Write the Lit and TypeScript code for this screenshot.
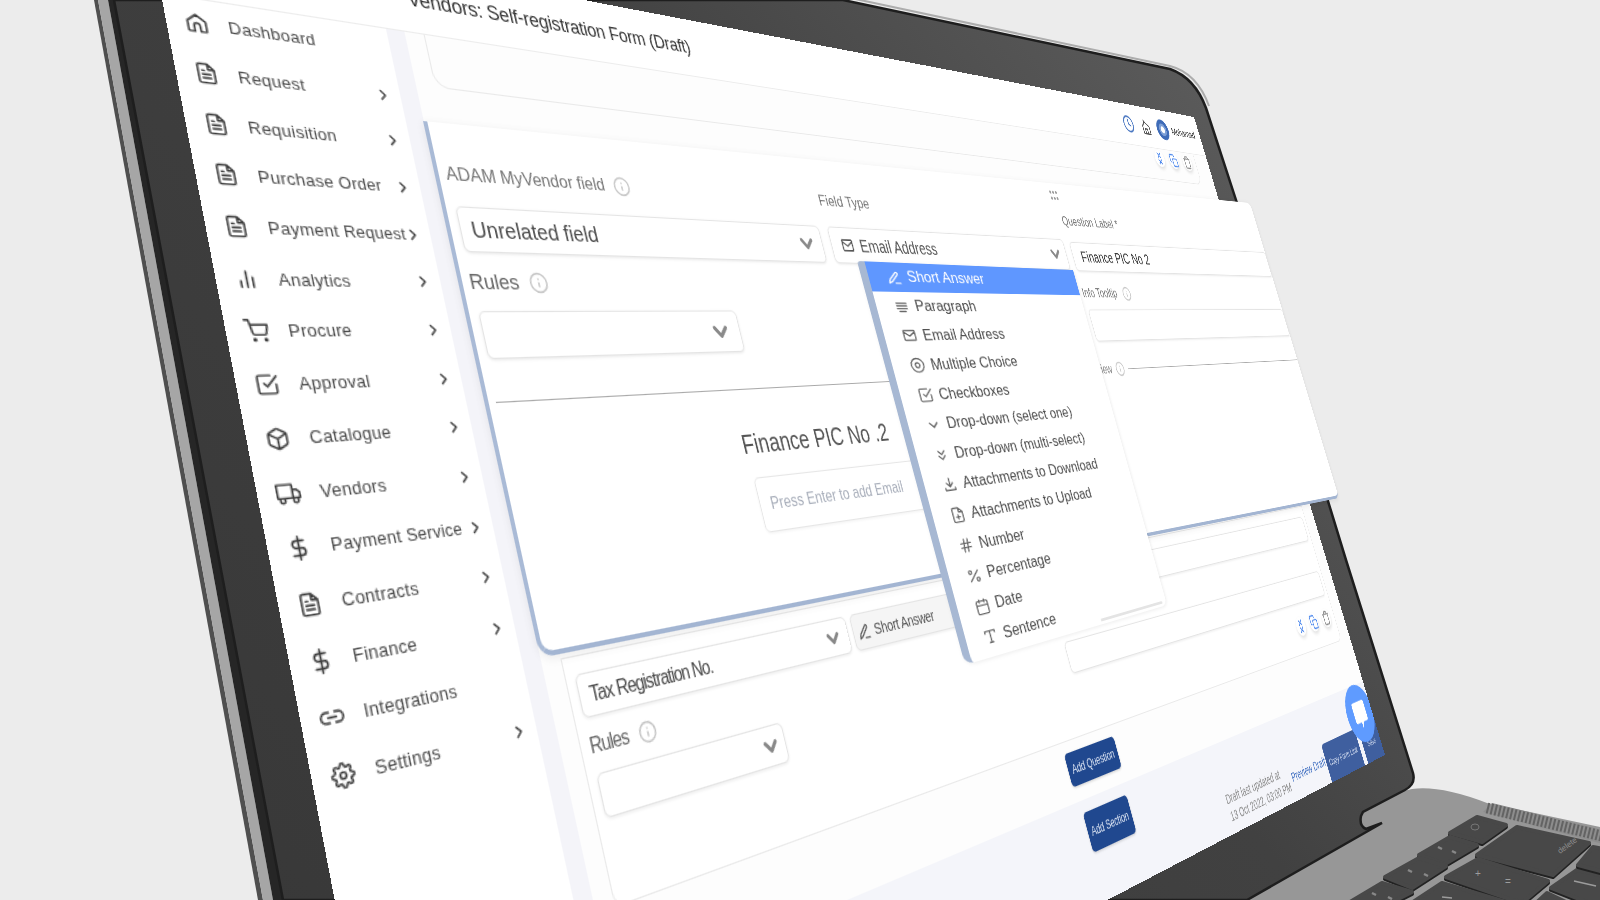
import { LitElement, html, css, svg } from "lit";
import { customElement } from "lit/decorators.js";

type P = [number, number];

function quad(W: number, H: number, q: [P, P, P, P]): string {
  const [p0, p1, p2, p3] = q;
  const det = (ax: number, ay: number, bx: number, by: number) => ax * by - ay * bx;
  const dx1 = p1[0] - p2[0], dy1 = p1[1] - p2[1];
  const dx2 = p3[0] - p2[0], dy2 = p3[1] - p2[1];
  const sx = p0[0] - p1[0] + p2[0] - p3[0], sy = p0[1] - p1[1] + p2[1] - p3[1];
  const D = det(dx1, dy1, dx2, dy2);
  const g = det(sx, sy, dx2, dy2) / D;
  const h = det(dx1, dy1, sx, sy) / D;
  const a = p1[0] - p0[0] + g * p1[0], b = p3[0] - p0[0] + h * p3[0], c = p0[0];
  const d = p1[1] - p0[1] + g * p1[1], e = p3[1] - p0[1] + h * p3[1], f = p0[1];
  return `matrix3d(${a / W},${d / W},0,${g / W},${b / H},${e / H},0,${h / H},0,0,1,0,${c},${f},0,1)`;
}

const circ = (x: number, y: number, r: number) => `M${x - r} ${y}a${r} ${r} 0 1 0 ${2 * r} 0a${r} ${r} 0 1 0 ${-2 * r} 0`;

const I: Record<string, string> = {
  home: "M3 10l9-7 9 7v10a1 1 0 0 1-1 1h-5v-6a3 3 0 0 0-6 0v6H4a1 1 0 0 1-1-1z",
  doc: "M14 2H6a2 2 0 0 0-2 2v16a2 2 0 0 0 2 2h12a2 2 0 0 0 2-2V8zM14 2v6h6M8 13h8M8 17h8M8 9h2",
  bars: "M18 20V10M12 20V4M6 20v-6",
  cart: circ(9, 21, 1) + circ(20, 21, 1) + "M1 1h4l2.68 13.39a2 2 0 0 0 2 1.61h9.72a2 2 0 0 0 2-1.61L23 6H6",
  check: "M9 11l3 3L22 4M21 12v7a2 2 0 0 1-2 2H5a2 2 0 0 1-2-2V5a2 2 0 0 1 2-2h11",
  box: "M21 16V8a2 2 0 0 0-1-1.73l-7-4a2 2 0 0 0-2 0l-7 4A2 2 0 0 0 3 8v8a2 2 0 0 0 1 1.73l7 4a2 2 0 0 0 2 0l7-4A2 2 0 0 0 21 16zM3.27 6.96L12 12.01l8.73-5.05M12 22.08V12",
  truck: "M1 3h15v13H1zM16 8h4l3 3v5h-7z" + circ(5.5, 18.5, 2.5) + circ(18.5, 18.5, 2.5),
  dollar: "M12 1v22M17 5H9.5a3.5 3.5 0 0 0 0 7h5a3.5 3.5 0 0 1 0 7H6",
  link: "M15 7h3a5 5 0 0 1 0 10h-3M9 17H6a5 5 0 0 1 0-10h3M8 12h8",
  gear: circ(12, 12, 3) + "M19.4 15a1.65 1.65 0 0 0 .33 1.82l.06.06a2 2 0 0 1 0 2.83 2 2 0 0 1-2.83 0l-.06-.06a1.65 1.65 0 0 0-1.82-.33 1.65 1.65 0 0 0-1 1.51V21a2 2 0 0 1-2 2 2 2 0 0 1-2-2v-.09A1.65 1.65 0 0 0 9 19.4a1.65 1.65 0 0 0-1.82.33l-.06.06a2 2 0 0 1-2.83 0 2 2 0 0 1 0-2.83l.06-.06a1.65 1.65 0 0 0 .33-1.82 1.65 1.65 0 0 0-1.51-1H3a2 2 0 0 1-2-2 2 2 0 0 1 2-2h.09A1.65 1.65 0 0 0 4.6 9a1.65 1.65 0 0 0-.33-1.82l-.06-.06a2 2 0 0 1 0-2.83 2 2 0 0 1 2.83 0l.06.06a1.65 1.65 0 0 0 1.82.33H9a1.65 1.65 0 0 0 1-1.51V3a2 2 0 0 1 2-2 2 2 0 0 1 2 2v.09a1.65 1.65 0 0 0 1 1.51 1.65 1.65 0 0 0 1.82-.33l.06-.06a2 2 0 0 1 2.83 0 2 2 0 0 1 0 2.83l-.06.06a1.65 1.65 0 0 0-.33 1.82V9a1.65 1.65 0 0 0 1.51 1H21a2 2 0 0 1 2 2 2 2 0 0 1-2 2h-.09a1.65 1.65 0 0 0-1.51 1z",
  pen: "M3 21l1.5-5L15 5.5a2.1 2.1 0 0 1 3 3L7.5 19zM13 21h8",
  lines: "M4 7h16M4 11h16M4 15h16M7 19h10",
  mail: "M4 5h16a1 1 0 0 1 1 1v12a1 1 0 0 1-1 1H4a1 1 0 0 1-1-1V6a1 1 0 0 1 1-1zM3 7l9 6 9-6",
  radio: circ(12, 12, 10) + circ(12, 12, 3.5),
  down: "M6 9l6 6 6-6",
  ddown: "M7 6l5 5 5-5M7 13l5 5 5-5",
  dl: "M12 3v12M7 10l5 5 5-5M4 17v3h16v-3",
  upl: "M14 2H6a2 2 0 0 0-2 2v16a2 2 0 0 0 2 2h12a2 2 0 0 0 2-2V8zM14 2v6h6M12 18v-6M9 15h6",
  hash: "M4 9h16M4 15h16M10 3L8 21M16 3l-2 18",
  pct: "M19 5L5 19" + circ(6.5, 6.5, 2.5) + circ(17.5, 17.5, 2.5),
  cal: "M5 4h14a2 2 0 0 1 2 2v14a2 2 0 0 1-2 2H5a2 2 0 0 1-2-2V6a2 2 0 0 1 2-2zM16 2v4M8 2v4M3 10h18",
  type: "M4 7V4h16v3M9 20h6M12 4v16",
  info: circ(12, 12, 10) + "M12 16v-4M12 8h.01",
  clock: circ(12, 12, 10) + "M12 6v6l4 2",
  bell: "M4 22V11l5-4V3l4 4 7 4v11zM9 22v-7h5v7",
  copy: "M11 9h9a2 2 0 0 1 2 2v9a2 2 0 0 1-2 2h-9a2 2 0 0 1-2-2v-9a2 2 0 0 1 2-2zM5 15H4a2 2 0 0 1-2-2V4a2 2 0 0 1 2-2h9a2 2 0 0 1 2 2v1",
  trash: "M3 6h18M19 6v14a2 2 0 0 1-2 2H7a2 2 0 0 1-2-2V6m3 0V4a2 2 0 0 1 2-2h4a2 2 0 0 1 2 2v2",
  move: "M8 3l8 7M16 3l-8 7M8 14l8 7M16 14l-8 7",
  next: "M9 5l7 7-7 7",
  vee: "M5 8l7 8 7-8",
};

const icon = (n: string, cls = "") =>
  html`<svg class="ic ${cls}" viewBox="0 0 24 24" fill="none" stroke="currentColor" stroke-width="2" stroke-linecap="round" stroke-linejoin="round">${svg`<path d=${I[n]}></path>`}</svg>`;

const NAV: [string, string, boolean][] = [
  ["home", "Dashboard", false],
  ["doc", "Request", true],
  ["doc", "Requisition", true],
  ["doc", "Purchase Order", true],
  ["doc", "Payment Request", true],
  ["bars", "Analytics", true],
  ["cart", "Procure", true],
  ["check", "Approval", true],
  ["box", "Catalogue", true],
  ["truck", "Vendors", true],
  ["dollar", "Payment Service", true],
  ["doc", "Contracts", true],
  ["dollar", "Finance", true],
  ["link", "Integrations", false],
  ["gear", "Settings", true],
];

const MENU: [string, string][] = [
  ["pen", "Short Answer"],
  ["lines", "Paragraph"],
  ["mail", "Email Address"],
  ["radio", "Multiple Choice"],
  ["check", "Checkboxes"],
  ["down", "Drop-down (select one)"],
  ["ddown", "Drop-down (multi-select)"],
  ["dl", "Attachments to Download"],
  ["upl", "Attachments to Upload"],
  ["hash", "Number"],
  ["pct", "Percentage"],
  ["cal", "Date"],
  ["type", "Sentence"],
];

const KEYS: P[][] = [
  [[1450, 833], [1477, 817], [1506, 825], [1482, 842]],
  [[1419, 855], [1450, 837], [1477, 845], [1445, 864]],
  [[1385, 877], [1419, 858], [1446, 866], [1412, 888]],
  [[1350, 902], [1382, 883], [1412, 892], [1392, 902]],
  [[1477, 855], [1517, 827], [1589, 843], [1553, 875]],
  [[1446, 877], [1478, 859], [1548, 881], [1523, 902], [1512, 900]],
  [[1413, 902], [1442, 883], [1513, 904]],
  [[1551, 888], [1577, 870], [1604, 876], [1604, 904], [1592, 904]],
  [[1578, 865], [1593, 847], [1604, 849], [1604, 872]],
  [[1535, 904], [1547, 893], [1570, 904]],
];

const pts = (k: P[], dy = 0) => k.map((p) => `${p[0]},${p[1] + dy}`).join(" ");

@customElement("app-root")
export class AppRoot extends LitElement {
  static styles = css`
    :host { display: block; width: 1600px; height: 900px; overflow: hidden; background: #ececec; }
    .scene { position: relative; width: 1600px; height: 900px; overflow: hidden; background: #ececec;
      font-family: "Liberation Sans", Arial, sans-serif; filter: blur(.4px); }
    .body3d { position: absolute; left: 0; top: 0; }
    .ic { display: block; flex: none; }

    .screen { position: absolute; left: 0; top: 0; width: 1440px; height: 900px; transform-origin: 0 0;
      background: #fff; overflow: hidden; display: flex; flex-direction: column; }
    .top { height: 59px; flex: none; box-sizing: border-box; display: flex; align-items: center; padding-left: 197px;
      border-bottom: 1px solid #ececec; }
    .title { font-size: 18px; color: #333; letter-spacing: -.22px; }
    .tools { margin-left: auto; display: flex; align-items: center; padding-right: 14px; }
    .tools .clock { width: 26px; height: 26px; color: #4b78c2; }
    .tools .bell { width: 24px; height: 24px; color: #555; margin-left: 18px; }
    .avatar { width: 30px; height: 30px; border-radius: 50%; background: #fff; border: 6px solid #3f6cb8; box-sizing: border-box; margin-left: 16px;
      box-shadow: inset 0 0 0 4px #7d9fd6; }
    .who { font-size: 14px; color: #333; margin-left: 8px; }
    .under { flex: 1; display: flex; min-height: 0; background: #f4f4f9; }
    .side { width: 172px; flex: none; background: #fff; }
    .row { height: 37.7px; display: flex; align-items: center; color: #4a4a4a; font-size: 13px; letter-spacing: .25px; }
    .row .ico { width: 17px; height: 17px; margin-left: 13px; color: #3c3c3c; }
    .row .lbl { margin-left: 14px; white-space: nowrap; flex: 1; }
    .row .chev { width: 12px; height: 12px; color: #444; margin-right: 9px; stroke-width: 3; }

    .main { flex: 1; margin-left: 16px; background: #fdfdfd; display: flex; flex-direction: column; min-width: 0; }
    .card1 { margin-left: 17px; width: 1200px; height: 45px; flex: none; box-sizing: border-box; background: #fdfdfd;
      border: 1px solid #e9e9e9; border-top: none; border-radius: 0 0 14px 14px; display: flex; justify-content: flex-end;
      align-items: flex-start; padding: 0 10px; gap: 12px; }
    .card2 { margin: 456px 0 0 17px; width: 1210px; height: 183px; flex: none; box-sizing: border-box; background: #fff;
      border: 1px solid #e9e9e9; border-radius: 0 0 10px 10px; padding: 13px 7px 0 8px; position: relative; }
    .acts { display: flex; gap: 12px; justify-content: flex-end; }
    .card1 .acts { margin-top: 2px; }
    .act { width: 24px; height: 24px; border-radius: 50%; background: #fff; box-shadow: 0 3px 5px rgba(0, 0, 0, .12);
      display: flex; align-items: center; justify-content: center; color: #4a86ec; }
    .act .ic { width: 20px; height: 26px; }
    .act.grey { color: #8a8a8a; }
    .qgrid { display: grid; grid-template-columns: 296px 296px 589px; column-gap: 6px; }
    .box { box-sizing: border-box; height: 33px; background: #fff; border: 1px solid #e4e4e4; border-radius: 6px;
      box-shadow: 0 1px 3px rgba(0, 0, 0, .08); display: flex; align-items: center; padding: 0 9px; color: #555; white-space: nowrap; }
    .box.fill { background: #f5f5f5; padding-left: 5px; }
    .tax { font-size: 16px; letter-spacing: -1.05px; color: #4a4a4a; flex: 1; }
    .vee { width: 20px; height: 20px; color: #888; stroke-width: 4; }
    .sa { font-size: 15px; letter-spacing: -.35px; margin-left: 5px; color: #555; }
    .sa-ic { width: 17px; height: 17px; color: #555; margin-left: 0; }
    .rules2 { display: flex; align-items: center; height: 41px; font-size: 16px; letter-spacing: -1px; color: #666; gap: 10px; grid-column: 1 / 4; }
    .rules2 .ic { width: 18px; height: 18px; color: #c4c4c4; }
    .sel2 { justify-content: flex-end; padding-right: 6px; width: 192px; }
    .in3 { grid-column: 3; }
    .card2 .acts { margin-top: 16px; padding-right: 4px; }
    .addq { margin: 11px auto 15px; width: 90px; height: 33px; flex: none; }
    .btn { background: #20488f; color: #dfe7f5; border-radius: 5px; font-size: 13px; letter-spacing: -.2px; display: flex; align-items: center;
      justify-content: center; white-space: nowrap; box-shadow: 0 1px 3px rgba(0, 0, 0, .2); }
    .foot { flex: 1; background: #f4f5fa; display: grid; grid-template-columns: 1fr 80px 1fr; position: relative; min-height: 0; }
    .adds { margin-top: 12px; height: 39px; grid-column: 2; }
    .fright { grid-column: 3; display: flex; justify-content: flex-end; align-items: flex-start; margin-left: -400px; }
    .draft { width: 149px; margin-top: 52px; font-size: 14.5px; line-height: 19px; color: #8c8c8c; white-space: nowrap; letter-spacing: -.1px; }
    .prev { width: 80px; margin: 62px 12px 0 5px; font-size: 15px; color: #3c6cc0; white-space: nowrap; }
    .copybtn { width: 96px; height: 47px; margin-top: 51px; background: #3f5f9f; color: #d5def0; font-size: 11.5px; border-radius: 6px 6px 0 0;
      display: flex; align-items: center; justify-content: center; white-space: nowrap; }
    .save { width: 52px; height: 47px; margin: 51px 0 0 10px; background: #3f5f9f; color: #c3cfe8; font-size: 11px;
      display: flex; align-items: center; justify-content: center; }
    .fab { position: absolute; right: -3px; top: -1px; width: 74px; height: 74px; border-radius: 50%; background: #5f9bff;
      display: flex; align-items: center; justify-content: center; color: #fff; }
    .fab svg { width: 46px; height: 46px; }

    .panel { position: absolute; left: 0; top: 0; width: 1400px; height: 450px; transform-origin: 0 0; box-sizing: border-box;
      background: #fff; border-left: 4px solid #a9bad6; border-bottom: 4px solid #a3b5d2; border-radius: 0 10px 10px 14px; overflow: hidden;
      padding-top: 34px; box-shadow: 0 2px 8px rgba(0, 0, 0, .08); }
    .dots { position: absolute; left: 880px; top: 10px; width: 16px; height: 14px; display: grid; grid-template-columns: repeat(3, 4px); gap: 2px 2px; }
    .dots i { background: #9a9a9a; border-radius: 50%; height: 4px; display: block; }
    .pgrid { display: grid; grid-template-columns: 434px 423px 1fr; column-gap: 13px; padding-left: 9px; }
    .plabel { font-size: 17px; color: #777; height: 24px; display: flex; align-items: center; gap: 10px; margin-left: -2px; white-space: nowrap; }
    .plabel .ic { width: 20px; height: 20px; color: #c8c8c8; }
    .plabel.big { font-size: 19px; color: #666; height: 26px; }
    .plabel.sm { font-size: 16px; color: #777; height: 26px; gap: 13px; }
    .low { position: relative; top: 4px; }
    .pbox { box-sizing: border-box; height: 40px; border: 1px solid #e4e4e4; border-radius: 6px; background: #fff;
      box-shadow: 0 1px 3px rgba(0, 0, 0, .1); display: flex; align-items: center; padding: 0 10px; white-space: nowrap; color: #555; }
    .pbox .grow { flex: 1; }
    .pbox .vee { width: 24px; height: 24px; color: #8a8a8a; stroke-width: 4; }
    .pselect { font-size: 20.5px; color: #4c4c4c; }
    .ftype { font-size: 20px; }
    .ftype .ic:first-child { width: 20px; height: 20px; color: #555; margin: 0 9px 0 4px; }
    .fin { font-size: 20px; color: #333; padding-left: 17px; margin-top: 3px; height: 38px; }
    .m16 { margin-top: 16px; }
    .m12 { margin-top: 12px; }
    .h41 { height: 41px; }
    .w288 { width: 288px; justify-content: flex-end; padding-right: 12px; }
    .divider { margin-top: 27px; height: 18px; padding-left: 7px; display: flex; align-items: center; gap: 8px; font-size: 16px; color: #888; }
    .divider .ln { height: 1px; background: #a9a9a9; }
    .divider .l1 { width: 836px; }
    .divider .l2 { flex: 1; }
    .divider .ic { width: 20px; height: 20px; color: #c8c8c8; }
    .ptitle { margin: 29px 0 0 264px; font-size: 25px; line-height: 30px; color: #555; white-space: nowrap; }
    .pinput { box-sizing: border-box; margin: 17px 0 0 268px; width: 440px; height: 52px; border: 1px solid #e6e6e6; border-radius: 6px;
      display: flex; align-items: center; padding-left: 13px; font-size: 17px; color: #a9afbb; white-space: nowrap; box-shadow: 0 1px 3px rgba(0, 0, 0, .06); }

    .drop { position: absolute; left: 0; top: 0; width: 280px; height: 404px; transform-origin: 0 0; box-sizing: border-box; background: #fff;
      border-left: 8px solid #a7b8d3; border-radius: 4px 0 8px 10px; box-shadow: 1px 1px 4px rgba(0, 0, 0, .08); font-size: 16px; color: #4c4c4c; }
    .mi { height: 30.8px; display: flex; align-items: center; padding-left: 20px; white-space: nowrap; }
    .mi .ic { width: 17px; height: 17px; margin-right: 7px; color: #666; }
    .mi.on { background: #5f97ff; color: #fff; }
    .mi.on .ic { color: #fff; }
    .thumb { position: absolute; right: 6px; bottom: 3px; width: 96px; height: 3px; background: #e4e4e4; border-radius: 2px; }
  `;

  render() {
    const scr = quad(1440, 900, [[146, -84], [1194, 117], [1385, 755], [405, 1267]]);
    const pan = quad(1400, 450, [[423, 121], [1250, 203], [1339, 498], [540, 658]]);
    const dro = quad(280, 404, [[857, 261], [1073, 270], [1167, 605], [965, 665]]);
    const vee = icon("vee", "vee");
    return html`<div class="scene">
      <svg class="body3d" width="1600" height="900" viewBox="0 0 1600 900">
        <defs>
          <linearGradient id="bz" gradientUnits="userSpaceOnUse" x1="200" y1="900" x2="1200" y2="60">
            <stop offset="0" stop-color="#383838"></stop>
            <stop offset=".65" stop-color="#414141"></stop>
            <stop offset="1" stop-color="#5b5b5b"></stop>
          </linearGradient>
        </defs>
        <path d="M1340 806L1412 789Q1440 785 1487 803L1610 829V910H1230Z" fill="#979797"></path>
        <path d="M1483 812L1492 803L1610 832V846Z" fill="#8d8d8d"></path>
        <path d="M1487 808L1610 838" stroke="#636363" stroke-width="11" stroke-dasharray="2 2"></path>
        ${KEYS.map((k) => svg`<polygon points=${pts(k, 2)} fill="#222" stroke="#222" stroke-width="4" stroke-linejoin="round"></polygon>
          <polygon points=${pts(k)} fill="#484848" stroke="#484848" stroke-width="4" stroke-linejoin="round"></polygon>`)}
        <ellipse cx="1475" cy="827" rx="4" ry="3" fill="none" stroke="#777"></ellipse>
        <path d="M1438 847l4 2M1452 851l4 2M1408 870l4 2M1424 874l4 2M1372 893l4 2M1388 897l4 2" stroke="#888" stroke-width="2.5"></path>
        <text x="1560" y="854" font-size="8" fill="#8e8e8e" font-family="Liberation Sans" transform="rotate(-36 1560 854)">delete</text>
        <text x="1475" y="877" font-size="10" fill="#9c9c9c" font-family="Liberation Sans">+</text>
        <text x="1505" y="885" font-size="10" fill="#9c9c9c" font-family="Liberation Sans">=</text>
        <path d="M1574 881l22 5" stroke="#9c9c9c" stroke-width="1.5"></path>
        <path d="M1442 897l10 1" stroke="#9c9c9c" stroke-width="1.5"></path>
        <polygon points="94,0 258,900 263,900 98,0" fill="#4f4f4f"></polygon>
        <polygon points="98,0 263,900 273,900 108,0" fill="#a6a6a6"></polygon>
        <polygon points="108,0 273,900 284,900 114,0" fill="#262626"></polygon>
        <path d="M846 -3L1170 66Q1197 73 1209 106" fill="none" stroke="#adadad" stroke-width="2"></path>
        <path d="M114 0L283 900L1247 900L1382 823L1366 829Q1359 826 1361 816L1363 812L1405 790Q1416 784 1413 773L1346 560L1236 200L1206 108Q1195 78 1170 69L843 0Z"
          fill="url(#bz)" stroke="#1e1e1e" stroke-width="2.5"></path>
      </svg>

      <div class="screen" style="transform:${scr}">
        <header class="top">
          <div class="title">Vendors: Self-registration Form (Draft)</div>
          <div class="tools">
            ${icon("clock", "clock")} ${icon("bell", "bell")}
            <div class="avatar"></div>
            <div class="who">Mohamad</div>
          </div>
        </header>
        <div class="under">
          <nav class="side">
            ${NAV.map(([ic, t, c]) => html`<div class="row">${icon(ic, "ico")}<span class="lbl">${t}</span>${c ? icon("next", "chev") : ""}</div>`)}
          </nav>
          <main class="main">
            <section class="card1">
              <div class="acts">
                <div class="act">${icon("move")}</div>
                <div class="act">${icon("copy")}</div>
                <div class="act grey">${icon("trash")}</div>
              </div>
            </section>
            <section class="card2">
              <div class="qgrid">
                <div class="box"><span class="tax">Tax Registration No.</span>${vee}</div>
                <div class="box fill">${icon("pen", "sa-ic")}<span class="sa">Short Answer</span></div>
                <div class="box"></div>
                <div class="rules2">Rules ${icon("info")}</div>
                <div class="box sel2">${vee}</div>
                <div class="box in3"></div>
              </div>
              <div class="acts">
                <div class="act">${icon("move")}</div>
                <div class="act">${icon("copy")}</div>
                <div class="act grey">${icon("trash")}</div>
              </div>
            </section>
            <div class="btn addq">Add Question</div>
            <footer class="foot">
              <div class="btn adds">Add Section</div>
              <div class="fright">
                <div class="draft">Draft last updated at<br />13 Oct 2022, 03:00 PM</div>
                <div class="prev">Preview Draft</div>
                <div class="copybtn">Copy Form Link</div>
                <div class="save">Save</div>
              </div>
              <div class="fab"><svg viewBox="0 0 24 24" fill="currentColor"><path d="M5 4h14a2 2 0 0 1 2 2v10a2 2 0 0 1-2 2h-5l-3 4v-4H5a2 2 0 0 1-2-2V6a2 2 0 0 1 2-2z"></path></svg></div>
            </footer>
          </main>
        </div>
      </div>

      <div class="panel" style="transform:${pan}">
        <div class="dots"><i></i><i></i><i></i><i></i><i></i><i></i></div>
        <div class="pgrid">
          <div class="plabel">ADAM MyVendor field ${icon("info")}</div>
          <div class="plabel">Field Type</div>
          <div class="plabel low">Question Label *</div>
        </div>
        <div class="pgrid m16">
          <div class="pbox pselect"><span class="grow">Unrelated field</span>${vee}</div>
          <div class="pbox ftype">${icon("mail")}<span class="grow">Email Address</span>${vee}</div>
          <div class="pbox fin">Finance PIC No 2</div>
        </div>
        <div class="pgrid m12">
          <div class="plabel big">Rules ${icon("info")}</div>
          <div></div>
          <div class="plabel sm low">Info Tooltip ${icon("info")}</div>
        </div>
        <div class="pgrid m12">
          <div class="pbox h41 w288">${vee}</div>
          <div></div>
          <div class="pbox h41"></div>
        </div>
        <div class="divider">
          <div class="ln l1"></div><span>Preview</span>${icon("info")}<div class="ln l2"></div>
        </div>
        <div class="ptitle">Finance PIC No .2</div>
        <div class="pinput">Press Enter to add Email</div>
      </div>

      <div class="drop" style="transform:${dro}">
        ${MENU.map(([ic, t], i) => html`<div class="mi ${i === 0 ? "on" : ""}">${icon(ic)}<span>${t}</span></div>`)}
        <div class="thumb"></div>
      </div>
    </div>`;
  }
}
